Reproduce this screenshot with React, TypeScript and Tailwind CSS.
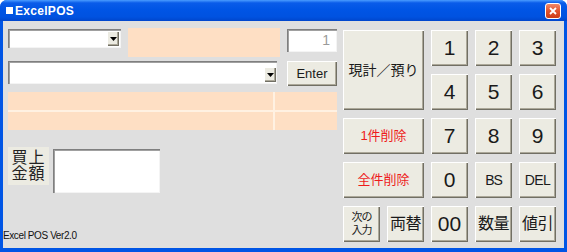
import React from "react";

const btn =
  "flex items-center justify-center bg-[#ecebe2] text-[#1a1a1a] shadow-[inset_1px_1px_0_#ffffff,inset_-1px_-1px_0_#716f64,inset_-2px_-2px_0_#aca899]";

function DropArrow({ className }: { className: string }) {
  return (
    <div
      className={`${className} flex items-center justify-center bg-[#ecebe2] shadow-[inset_1px_1px_0_#ffffff,inset_-1px_-1px_0_#716f64,inset_-2px_-2px_0_#aca899]`}
    >
      <svg width="7" height="4" viewBox="0 0 7 4">
        <path d="M0 0h7L3.5 4z" fill="#000" />
      </svg>
    </div>
  );
}

function TitleBar() {
  return (
    <div className="h-[21px] flex items-center justify-between bg-[linear-gradient(180deg,#4a9cff_0%,#0a5ce9_14%,#0055e5_45%,#0052e0_80%,#0046cc_100%)]">
      <div className="flex items-center pl-[6px] gap-[2px]">
        <div className="w-[7px] h-[7px] bg-white" />
        <span className="text-white font-bold text-[12px] leading-none tracking-[0.3px]">
          ExcelPOS
        </span>
      </div>
      <div className="mr-[6px] w-[16px] h-[16px] rounded-[3px] border border-white bg-[linear-gradient(180deg,#f0896a_0%,#e1532d_50%,#cc3d17_100%)] flex items-center justify-center">
        <svg width="8" height="8" viewBox="0 0 8 8">
          <path d="M1 1L7 7M7 1L1 7" stroke="#fff" strokeWidth="1.8" />
        </svg>
      </div>
    </div>
  );
}

export default function App() {
  const sunken =
    "bg-white shadow-[inset_1px_1px_0_#7f7f7f,inset_2px_2px_0_#a0a0a0,inset_-1px_-1px_0_#f4f4f4]";
  return (
    <div className="w-[567px] h-[252px] flex flex-col bg-[#0055e5] rounded-t-[7px] overflow-hidden font-['Liberation_Sans','Noto_Sans_CJK_JP',sans-serif]">
      <TitleBar />
      <div className="flex-1 mx-[3px] mb-[4px] bg-[#dfdfdf] flex">
        {/* left panel */}
        <div className="w-[334px] flex flex-col">
          <div className="pl-[5px] pt-[7px] flex flex-col">
            <div className="flex items-start">
              <div className={`mt-[1px] w-[113px] h-[19px] ${sunken} flex items-center justify-end pr-[2px]`}>
                <DropArrow className="w-[12px] h-[15px]" />
              </div>
              <div className="ml-[7px] w-[152px] h-[29px] bg-[#fedfc4]" />
              <div className={`ml-[7px] mt-[1px] w-[50px] h-[23px] ${sunken} flex items-center justify-end pr-[7px] text-[14px] text-[#9a9a9a]`}>
                1
              </div>
            </div>
            <div className="mt-[4px] flex items-start">
              <div className={`w-[269px] h-[23px] ${sunken} flex items-end justify-end pr-[1px] pb-[2px]`}>
                <DropArrow className="w-[12px] h-[15px]" />
              </div>
              <div className={`ml-[10px] w-[50px] h-[25px] ${btn} text-[13px]`}>Enter</div>
            </div>
            <div className="mt-[6px] w-[329px] grid grid-cols-[265px_62px] grid-rows-[18px_18px] gap-[2px] bg-[#fff1e2]">
              <div className="bg-[#fedfc4]" />
              <div className="bg-[#fedfc4]" />
              <div className="bg-[#fedfc4]" />
              <div className="bg-[#fedfc4]" />
            </div>
            <div className="mt-[17px] flex items-start">
              <div className="w-[41px] h-[38px] bg-[#ecebe2] flex flex-col items-center justify-center text-[16px] leading-[16px] tracking-[1px] text-[#222]">
                <span>買上</span>
                <span>金額</span>
              </div>
              <div className={`ml-[4px] mt-[2px] w-[107px] h-[44px] ${sunken}`} />
            </div>
          </div>
          <div className="mt-auto pb-[6px] text-[10px] leading-[12px] tracking-[-0.4px] text-[#111]">
            Excel POS Ver2.0
          </div>
        </div>
        {/* keypad */}
        <div className="ml-[6px] pt-[9px] grid grid-cols-[repeat(5,37px)] grid-rows-[repeat(5,36px)] gap-x-[7px] gap-y-[8px]">
          <div className={`${btn} col-span-2 row-span-2 text-[14px]`}>現計／預り</div>
          <div className={`${btn} text-[21px]`}>1</div>
          <div className={`${btn} text-[21px]`}>2</div>
          <div className={`${btn} text-[21px]`}>3</div>
          <div className={`${btn} text-[21px]`}>4</div>
          <div className={`${btn} text-[21px]`}>5</div>
          <div className={`${btn} text-[21px]`}>6</div>
          <div className={`${btn} col-span-2 text-[13px] text-[#ee1c1c]`}>1件削除</div>
          <div className={`${btn} text-[21px]`}>7</div>
          <div className={`${btn} text-[21px]`}>8</div>
          <div className={`${btn} text-[21px]`}>9</div>
          <div className={`${btn} col-span-2 text-[13px] text-[#ee1c1c]`}>全件削除</div>
          <div className={`${btn} text-[21px]`}>0</div>
          <div className={`${btn} text-[14px] tracking-[-1px]`}>BS</div>
          <div className={`${btn} text-[14px] tracking-[-0.5px]`}>DEL</div>
          <div className={`${btn} flex-col text-[11px] leading-[13px] tracking-[-1px]`}>
            <span>次の</span>
            <span>入力</span>
          </div>
          <div className={`${btn} text-[16px] tracking-[-0.5px]`}>両替</div>
          <div className={`${btn} text-[21px]`}>00</div>
          <div className={`${btn} text-[16px] tracking-[-0.5px]`}>数量</div>
          <div className={`${btn} text-[16px] tracking-[-0.5px]`}>値引</div>
        </div>
      </div>
    </div>
  );
}
